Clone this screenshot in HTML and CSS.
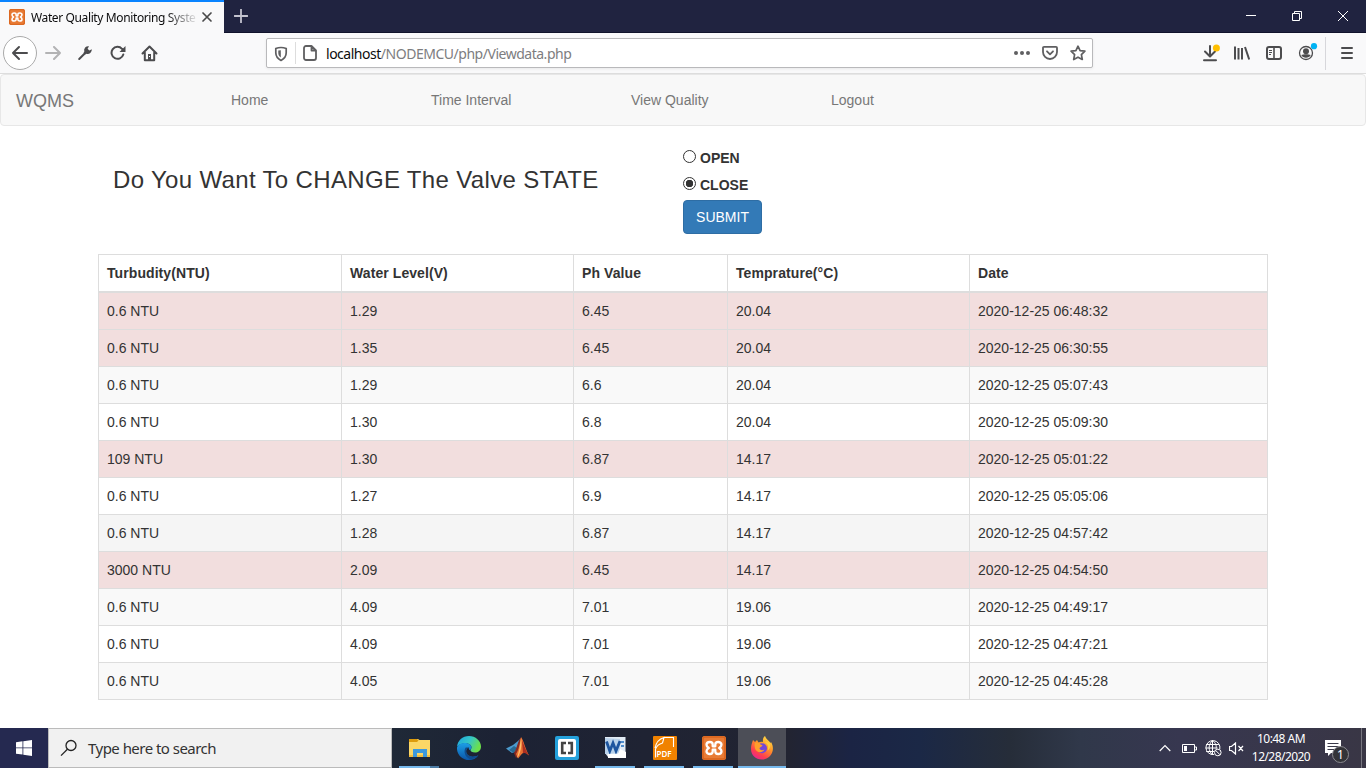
FILE: index.html
```html
<!DOCTYPE html>
<html lang="en">
<head>
<meta charset="utf-8">
<title>Water Quality Monitoring System</title>
<link rel="stylesheet" href="styles.css">
</head>
<body>
<svg class="defs" aria-hidden="true">
  <symbol id="xampp" viewBox="0 0 24 24">
    <rect width="24" height="24" rx="2.500" fill="#e87b35"/>
    <rect x="1" y="1" width="22" height="22" rx="2" fill="none" stroke="#d9641d" stroke-width="1.500"/>
    <path d="M12 10.300h-1.300V8.500C10.700 6.800 9.500 6 7.800 6S4.500 7 4.500 8.800 5.300 11 6.800 12C5.300 13 4.500 13.500 4.500 15.200S6.100 18 7.800 18s2.900-.8 2.900-2.500v-1.800h2.600v1.800c0 1.700 1.200 2.500 2.900 2.500s3.300-1 3.300-2.800-.8-2.200-2.300-3.200c1.500-1 2.300-1.500 2.300-3.200S17.900 6 16.200 6s-2.900.8-2.900 2.500v1.800z" fill="none" stroke="#fff" stroke-width="2.300" stroke-linejoin="round"/>
  </symbol>
</svg>
<div class="screen">
  <header class="titlebar">
    <div class="tab">
      <svg class="favicon" width="16" height="16"><use href="#xampp"/></svg>
      <span class="tab-title">Water Quality Monitoring Syste</span>
      <svg class="tab-close" width="12" height="12" viewBox="0 0 12 12"><path d="M2 2l8 8M10 2l-8 8" stroke="#4a4a4a" stroke-width="1.700" stroke-linecap="round"/></svg>
    </div>
    <svg class="new-tab" width="14" height="14" viewBox="0 0 14 14"><path d="M7 .5v13M.5 7h13" stroke="#c3c3cf" stroke-width="1.800" stroke-linecap="round"/></svg>
    <div class="window-buttons">
      <svg width="46" height="32" viewBox="0 0 46 32"><path d="M18 15.500h10" stroke="#fff"/></svg>
      <svg width="46" height="32" viewBox="0 0 46 32" fill="none" stroke="#fff"><path d="M18.500 13.500h7v7h-7zM20.500 13v-1.500h7v7H26"/></svg>
      <svg width="46" height="32" viewBox="0 0 46 32"><path d="M18 11l10 10M28 11L18 21" stroke="#fff"/></svg>
    </div>
  </header>

  <div class="toolbar">
    <div class="nav-buttons">
      <span class="back"><svg width="18" height="16" viewBox="0 0 18 16"><path d="M16 8H2M8 2L2 8l6 6" class="line"/></svg></span>
      <svg class="forward" width="18" height="16" viewBox="0 0 18 16"><path d="M2 8h14M10 2l6 6-6 6" class="line"/></svg>
      <svg class="wrench" width="16" height="16" viewBox="0 0 16 16"><path d="M2.200 14L8.500 7.700" stroke="#4c4c4e" stroke-width="2" stroke-linecap="round"/><path d="M14.800 4.300l-2.500 1.200-1.700-1.700L12 1.200a4.200 4.200 0 0 0-4.700 5.400L6.500 8l1.500 1.500 1.500-.7a4.200 4.200 0 0 0 5.300-4.500z" fill="#4c4c4e"/></svg>
      <svg class="reload" width="16" height="16" viewBox="0 0 16 16"><path d="M13.300 9.500A6 6 0 1 1 12 3.800l1.500 1.500" class="line"/><path d="M15.500 1v6h-6z" fill="#4c4c4e"/></svg>
      <svg class="home" width="17" height="17" viewBox="0 0 17 17"><path d="M1.500 8.500l7-7 7 7M3.800 7.500v7.700h9.400V7.500" class="line"/><path d="M7 9h3v6H7z" fill="#4c4c4e"/><path d="M8 11h1v1H8z" fill="#fff"/></svg>
    </div>
    <div class="urlbar">
      <svg class="shield" width="14" height="16" viewBox="0 0 14 16"><path d="M7 1.500c2 0 3.700.4 5.200 1v4.200c0 3.600-2 6-5.200 7.700-3.200-1.700-5.200-4.100-5.200-7.700V2.500C3.300 1.900 5 1.500 7 1.500z" fill="none" stroke="#5f5f61" stroke-width="1.700"/><path d="M6.800 4.200v7.200C5 10.200 4.300 8.700 4.300 7V4.600z" fill="#5f5f61"/></svg>
      <i class="url-divider"></i>
      <svg class="page-icon" width="14" height="16" viewBox="0 0 14 16"><path d="M3 1h5.500L13 5.500V13a2 2 0 0 1-2 2H3a2 2 0 0 1-2-2V3a2 2 0 0 1 2-2zM8.500 1v4.500H13" fill="none" stroke="#5f5f61" stroke-width="1.800" stroke-linejoin="round"/></svg>
      <span class="url"><b>localhost</b>/NODEMCU/php/Viewdata.php</span>
      <div class="url-actions">
        <svg width="16" height="16" viewBox="0 0 16 16" fill="#5f5f61"><circle cx="2" cy="8" r="2"/><circle cx="8" cy="8" r="2"/><circle cx="14" cy="8" r="2"/></svg>
        <svg width="16" height="16" viewBox="0 0 16 16" fill="none" stroke="#5f5f61" stroke-width="1.800" stroke-linecap="round" stroke-linejoin="round"><path d="M2 1.800h12a1 1 0 0 1 1 1V7A7 7 0 0 1 1 7V2.800a1 1 0 0 1 1-1z"/><path d="M5 6.300l3 3 3-3"/></svg>
        <svg width="16" height="16" viewBox="0 0 16 16" fill="none" stroke="#5f5f61" stroke-width="1.700" stroke-linejoin="round"><path d="M8 1.200l2.100 4.400 4.800.6-3.500 3.400.9 4.900L8 12.200l-4.300 2.300.9-4.900L1.100 6.200l4.800-.6z"/></svg>
      </div>
    </div>
    <div class="tools">
      <svg width="17" height="18" viewBox="0 0 17 18"><path d="M7 2v10M2 7.500l5 5 5-5M1 16.200h12" class="line"/><circle cx="13.400" cy="4" r="3.500" fill="#ffbf00"/></svg>
      <svg width="16" height="16" viewBox="0 0 16 16"><path d="M1 1.500v13M4.500 3v11.500M8 3v11.500M11 2l4.200 12.500" fill="none" stroke="#4c4c4e" stroke-width="2"/></svg>
      <svg width="16" height="16" viewBox="0 0 16 16"><rect x="1" y="2" width="14" height="12" rx="2" class="line"/><path d="M8 2v12" stroke="#4c4c4e" stroke-width="1.600"/><path d="M3 5.500h3M3 7.500h3M3 9.500h2" stroke="#4c4c4e"/></svg>
      <svg width="20" height="18" viewBox="0 0 20 18"><circle cx="8" cy="10" r="6.500" fill="none" stroke="#4c4c4e" stroke-width="1.300"/><circle cx="8" cy="8.300" r="3" fill="#4c4c4e"/><path d="M3.300 12c2-1 7.400-1 9.400 0-1.500 3.700-7.900 3.700-9.400 0z" fill="#4c4c4e"/><circle cx="16" cy="3.200" r="3.100" fill="#00b3f4"/></svg>
      <i class="tool-divider"></i>
      <svg width="12" height="14" viewBox="0 0 12 14"><path d="M1 2h10M1 7h10M1 12h10" class="line"/></svg>
    </div>
  </div>

  <main class="page">
    <nav class="navbar">
      <span class="brand">WQMS</span>
      <a>Home</a><a>Time Interval</a><a>View Quality</a><a>Logout</a>
    </nav>
    <section class="container">
      <form class="valve">
        <h3><span>Do You Want To CHANGE The Valve STATE</span></h3>
        <div class="choices">
          <label><i class="radio"></i><span class="open">OPEN</span></label>
          <label><i class="radio checked"></i><span class="close">CLOSE</span></label>
          <button type="button">SUBMIT</button>
        </div>
      </form>
      <table>
        <colgroup><col class="c1"><col class="c2"><col class="c3"><col class="c4"><col class="c5"></colgroup>
        <thead><tr><th>Turbudity(NTU)</th><th>Water Level(V)</th><th>Ph Value</th><th>Temprature(°C)</th><th>Date</th></tr></thead>
        <tbody>
          <tr class="danger"><td>0.6 NTU</td><td>1.29</td><td>6.45</td><td>20.04</td><td>2020-12-25 06:48:32</td></tr>
          <tr class="danger"><td>0.6 NTU</td><td>1.35</td><td>6.45</td><td>20.04</td><td>2020-12-25 06:30:55</td></tr>
          <tr class="odd"><td>0.6 NTU</td><td>1.29</td><td>6.6</td><td>20.04</td><td>2020-12-25 05:07:43</td></tr>
          <tr><td>0.6 NTU</td><td>1.30</td><td>6.8</td><td>20.04</td><td>2020-12-25 05:09:30</td></tr>
          <tr class="danger"><td>109 NTU</td><td>1.30</td><td>6.87</td><td>14.17</td><td>2020-12-25 05:01:22</td></tr>
          <tr><td>0.6 NTU</td><td>1.27</td><td>6.9</td><td>14.17</td><td>2020-12-25 05:05:06</td></tr>
          <tr class="hover"><td>0.6 NTU</td><td>1.28</td><td>6.87</td><td>14.17</td><td>2020-12-25 04:57:42</td></tr>
          <tr class="danger"><td>3000 NTU</td><td>2.09</td><td>6.45</td><td>14.17</td><td>2020-12-25 04:54:50</td></tr>
          <tr class="odd"><td>0.6 NTU</td><td>4.09</td><td>7.01</td><td>19.06</td><td>2020-12-25 04:49:17</td></tr>
          <tr><td>0.6 NTU</td><td>4.09</td><td>7.01</td><td>19.06</td><td>2020-12-25 04:47:21</td></tr>
          <tr class="odd"><td>0.6 NTU</td><td>4.05</td><td>7.01</td><td>19.06</td><td>2020-12-25 04:45:28</td></tr>
        </tbody>
      </table>
    </section>
  </main>

  <footer class="taskbar">
    <div class="start"><svg width="16" height="16" viewBox="0 0 16 16" fill="#fff"><path d="M0 2.200L6.500 1.300V7.500H0zM7.300 1.200L16 0v7.500H7.300zM0 8.300h6.500v6.200L0 13.700zM7.300 8.300H16V16l-8.700-1.300z"/></svg></div>
    <div class="search">
      <svg width="18" height="18" viewBox="0 0 18 18" fill="none" stroke="#222" stroke-width="1.300"><circle cx="11" cy="6.500" r="5"/><path d="M7.400 10.200L1 16.600"/></svg>
      <span>Type here to search</span>
    </div>
    <div class="apps">
      <div class="app running stacked"><svg width="24" height="24" viewBox="0 0 24 24"><path d="M1 3h9l1.500 1H22v17H1z" fill="#fbd766"/><path d="M1 3h8l1.500 1.500L9 6H1z" fill="#dd9c0d"/><path d="M5 21v-8h14v8h-4v-4H9v4z" fill="#3d99dc"/><path d="M1 19h4v2H1zM19 19h3v2h-3zM9 19h6v2H9z" fill="#f3bd3c"/></svg></div>
      <div class="app"><svg width="24" height="24" viewBox="0 0 24 24">
        <defs><linearGradient id="e1" x1="0" x2="1" y1="0" y2=".4"><stop stop-color="#1ba3df"/><stop offset=".55" stop-color="#35c6c8"/><stop offset="1" stop-color="#6be04c"/></linearGradient><linearGradient id="e2" x1="0" y1="0" x2="0" y2="1"><stop stop-color="#1c9fe6"/><stop offset="1" stop-color="#0b55a8"/></linearGradient></defs>
        <path d="M0 11C.5 4.500 5.500 0 12 0s12 5 12 10.500c0 4-3 6-6 6s-4.500-1.200-4.500-2.200 1-1.300 1-3c0-2-2.500-4-6-4C4.500 7.300 1 9 0 11z" fill="url(#e1)"/>
        <path d="M0 11.500c1-3 4-4.500 7.500-4.500 4 0 7 2 7 4.500 0 1.500-1.200 1.600-1.200 2.800-1.300-.5-1.800-1.800-1.500-3-2.300 1-3 3-2.500 5.200 1 4 6.500 5.500 12 2.700C19 22.500 15.800 24 12 24 5.500 24-.5 18.500 0 11.500z" fill="url(#e2)"/>
        <path d="M8.800 11.500c-2.500 3-1.300 9.500 4 11.400 4 .2 7-1.300 8.500-3.700-5.500 2.800-11 1.300-12-2.700-.5-2 .2-4 2-5z" fill="#104b8c"/></svg></div>
      <div class="app"><svg width="24" height="24" viewBox="0 0 24 24"><path d="M0 12.500l7-3.500 5-4 2-2-4 12-4 2z" fill="#4b9acd"/><path d="M3 14l5-4 3 2-3 5z" fill="#286a94"/><path d="M8 17c3-4 4-14 7.500-15.500L12 20l-2 2z" fill="#872b22"/><path d="M15 1c2.500 3 4.500 12.500 8 18.500-2.500-2.500-4-3.500-6-2.500-2 1.500-3.500 4-5 5.500L10 18c3-4 4-12 5-17z" fill="#ea7132"/><path d="M15 2c1 5 .5 12-2.500 18l-1.500 2c2-6 3-13 4-20z" fill="#ffc06d"/><path d="M16 4c2 5 4 11 7 15.500-3-2-4-3-6-2z" fill="#ac3021"/></svg></div>
      <div class="app"><svg width="24" height="24" viewBox="0 0 24 24"><rect width="24" height="24" rx="2" fill="#24a1dc"/><rect x="3" y="3" width="18" height="18" rx="2" fill="#fff"/><path d="M11 7H7.200v10H11M13 7h3.800v10H13" fill="none" stroke="#444" stroke-width="2.600"/></svg></div>
      <div class="app running"><svg width="24" height="24" viewBox="0 0 24 24"><path d="M1 1h20.500v20H4L1 17z" fill="#e2ebf5"/><path d="M1 2l15 1v14L1 18z" fill="#b9d2eb"/><path d="M2.500 5.500l3.300 9.500L9 7l3 8 4-10" fill="none" stroke="#1d559f" stroke-width="2.800"/><path d="M17 5h3v2h-3zM17 9h3v2h-3z" fill="#4f8dcc"/><path d="M4 18h10l2-5 6 3v6H4z" fill="#fff"/></svg></div>
      <div class="app running"><div class="pdf"><svg width="24" height="24" viewBox="0 0 24 24"><rect width="24" height="24" rx="1" fill="#f08200"/><path d="M2 12C3 7 6 3 11 1.500L9.500 7C6 8 3.500 10.500 2.500 13v8.500M11 1.500h9.500V11" fill="none" stroke="#fff" stroke-width="1.100"/></svg><span>PDF</span></div></div>
      <div class="app running"><svg width="24" height="24"><use href="#xampp"/></svg></div>
      <div class="app running active"><svg width="24" height="24" viewBox="0 0 24 24">
        <defs><linearGradient id="f1" x1=".8" y1="0" x2=".2" y2="1"><stop stop-color="#ffe449"/><stop offset=".4" stop-color="#ff9528"/><stop offset=".75" stop-color="#ff3d50"/><stop offset="1" stop-color="#e5229a"/></linearGradient></defs>
        <path d="M2 7l1-3 2 2 2-2 1.500 2.500C10 5.500 12 5.500 13 6c-.5-3 .5-5 2-6 .8 3 4 4.500 5.500 7l.5-1c2 3 2.700 8 .7 11.500C19.800 21 16.500 23.500 12 23.500 5.500 23.500 1 19 1 13c0-2.300.3-4 1-6z" fill="url(#f1)"/>
        <circle cx="12" cy="12.300" r="5" fill="#7548d9"/><path d="M5 7c3-1 5 0 5.500 1.500l2 .7c-.3 1.500-2.500 1.800-3 2.800 0 2 2.500 3 5 1.500-2 4-8 3.300-9.300-.5C4.500 10.500 4.400 9 5 7z" fill="#ff9f2b"/><path d="M14 6c4 1 5 5 3.500 8.500 2.500-1 3.500-5 2-8z" fill="#ffcf3d"/></svg></div>
    </div>
    <div class="tray">
      <svg class="chevron" width="12" height="8" viewBox="0 0 12 8"><path d="M.7 7L6 1.500 11.300 7" fill="none" stroke="#fff" stroke-width="1.200"/></svg>
      <svg class="battery" width="15" height="9" viewBox="0 0 15 9"><path d="M.5.500h12v8H.5zM13 3h1.500v3H13" fill="none" stroke="#fff"/><path d="M2 2h3v5H2z" fill="#fff"/></svg>
      <svg class="globe" width="17" height="17" viewBox="0 0 17 17" fill="none" stroke="#fff"><path d="M9 14.500A7 7 0 1 1 14.800 9M7.500.500C3 5 3 10 7.500 15M7.500.500C11 3 11.500 6 11.200 8.500M1.200 4.500h12.700M.5 8h12M1.200 11.500h8M7.500.500v14"/><circle cx="12.800" cy="12.500" r="3.300"/><path d="M10.500 10.300l4.500 4.500"/></svg>
      <svg class="volume" width="15" height="13" viewBox="0 0 15 13" fill="none" stroke="#fff"><path d="M.5 4.500h2l4-3.500v11l-4-3.500h-2zM9.500 4l4.500 5M14 4L9.500 9" stroke-width="1.200"/></svg>
      <div class="clock"><span class="time">10:48 AM</span><span class="date">12/28/2020</span></div>
      <div class="notice"><svg width="17" height="17" viewBox="0 0 17 17"><path d="M0 0h16v13H6l-3 3v-3H0z" fill="#fff"/><path d="M2.500 3.500h11M2.500 6.500h11M2.500 9.500h7" stroke="#3b3a4a"/></svg><span class="badge">1</span></div>
      <i class="peek"></i>
    </div>
  </footer>
</div>
</body>
</html>
```
FILE: styles.css
```css
* { box-sizing: border-box; }
body { margin: 0; }
svg { display: block; flex: none; }
.defs { position: absolute; width: 0; height: 0; }
.screen { width: 1366px; height: 768px; display: flex; flex-direction: column; overflow: hidden; background: #fff; font-family: "Liberation Sans", Arial, sans-serif; }
.line { fill: none; stroke: #4c4c4e; stroke-width: 2; stroke-linecap: round; stroke-linejoin: round; }

/* Browser window */
.titlebar { height: 33px; flex: none; display: flex; background: #202340; border-bottom: 1px solid #11132c; }
.tab { width: 224px; height: 33px; flex: none; display: flex; align-items: center; padding: 0 11px 2px 9px; background: #f9f9fa; border-top: 2px solid #0a84ff; }
.tab-title { width: 166px; margin: 2px 0 0 6px; white-space: nowrap; font: 12px/20px "Noto Sans", sans-serif; letter-spacing: -.38px; color: #0c0c0d; -webkit-mask-image: linear-gradient(90deg, #000 135px, transparent 168px); mask-image: linear-gradient(90deg, #000 135px, transparent 168px); }
.tab-close { margin-left: 4px; }
.new-tab { margin: 9px 0 0 10px; }
.window-buttons { display: flex; margin-left: auto; }
.toolbar { height: 41px; flex: none; display: flex; align-items: flex-start; background: #f9f9fa; border-bottom: 1px solid #ddd; }
.nav-buttons { width: 266px; height: 40px; display: flex; align-items: center; padding-left: 3px; }
.back { width: 34px; height: 34px; display: grid; place-items: center; border: 1px solid #aaa; border-radius: 50%; background: #fff; }
.forward { margin-left: 7px; opacity: .4; }
.wrench { margin-left: 15px; }
.reload { margin-left: 17px; }
.home { margin-left: 15px; }
.urlbar { width: 827px; height: 30px; margin-top: 5px; display: flex; align-items: center; padding: 0 6px 0 7px; background: #fff; border: 1px solid #b9b9bb; border-radius: 2px; box-shadow: 0 1px 3px #0001; }
.url-divider { width: 1px; height: 22px; margin: 0 7px 0 7px; background: #ddd; }
.shield { margin-top: 1px; }
.url { margin: 2px 0 0 9px; font: 14px/20px "Noto Sans", sans-serif; letter-spacing: -.48px; color: #7d7d80; white-space: nowrap; }
.url b { font-weight: 400; color: #0c0c0d; }
.url-actions { display: flex; gap: 12px; margin-left: auto; }
.tools { flex: 1; height: 40px; display: flex; align-items: center; padding-left: 110px; }
.tools svg:nth-child(2) { margin-left: 14px; }
.tools svg:nth-child(3) { margin-left: 16px; }
.tools svg:nth-child(4) { margin: -2px 0 0 16px; }
.tool-divider { width: 1px; height: 33px; margin: 0 15px 0 7px; background: #d7d7db; }

/* Page content */
.page { height: 654px; flex: none; color: #333; font-size: 14px; line-height: 20px; }
.navbar { height: 52px; display: flex; align-items: center; padding-left: 15px; border: 1px solid #e7e7e7; border-radius: 4px; background: #f8f8f8; color: #777; }
.brand { width: 215px; font-size: 18px; padding-top: 2px; }
.navbar a { width: 200px; margin-top: -1px; }
.container { width: 1170px; margin: 0 auto; }
.valve { height: 128px; display: flex; padding: 0 15px; }
.valve h3 { width: 570px; margin: 41px 0 0; font-size: 24px; line-height: 26px; font-weight: 400; letter-spacing: .34px; white-space: nowrap; }
.choices { display: flex; flex-direction: column; align-items: flex-start; padding-top: 22px; }
.choices label { height: 27px; display: flex; align-items: flex-start; gap: 4px; font-weight: 700; }
.radio { width: 13px; height: 13px; margin-top: 2px; border: 1px solid #333; border-radius: 50%; background: #fff; }
.radio.checked { background: radial-gradient(circle, #333 0 3.500px, #fff 4px); }
.choices button { width: 79px; height: 34px; margin-top: -2px; padding: 0; border: 1px solid #2e6da4; border-radius: 4px; background: #337ab7; color: #fff; font: 14px/20px "Liberation Sans", Arial, sans-serif; }
table { width: 1170px; table-layout: fixed; border-collapse: separate; border-spacing: 0; border: solid #ddd; border-width: 1px 0 0 1px; }
.c1 { width: 243px; }
.c2 { width: 232px; }
.c3 { width: 154px; }
.c4 { width: 242px; }
.c5 { width: 298px; }
th, td { height: 37px; padding: 0 8px; text-align: left; border: solid #ddd; border-width: 0 1px 1px 0; white-space: nowrap; }
th { height: 38px; border-bottom-width: 2px; letter-spacing: .08px; }
.odd { background: #f9f9f9; }
.hover { background: #f5f5f5; }
.danger { background: #f2dede; }

/* Desktop taskbar */
.taskbar { height: 40px; flex: none; display: flex; color: #fff; background: linear-gradient(90deg, #252a50 0, #1f2937 390px, #1c2234 500px, #222432 790px, #1b2444 850px, #1b2846 920px, #262d39 1010px, #30384a 1080px, #373750 1180px, #393645 1366px); font-family: "Noto Sans", sans-serif; }
.start { width: 48px; display: grid; place-items: center; background: #252950; }
.search { width: 344px; display: flex; align-items: center; padding-left: 11px; background: #f1f1f1; border: 1px solid #bbb; color: #333; font-size: 15px; }
.search span { margin-left: 10px; letter-spacing: -.53px; }
.apps { display: flex; padding-left: 3px; }
.app { width: 49px; height: 40px; display: grid; place-items: center; border-bottom: 2px solid transparent; }
.app svg { margin-top: 2px; }
.running { background: linear-gradient(#76b9ed, #76b9ed) 4px bottom / 40px 2px no-repeat border-box; }
.stacked { background: linear-gradient(90deg, #76b9ed 31px, #4d7da6 31px) 4px bottom / 40px 2px no-repeat border-box; }
.active { width: 48px; background: linear-gradient(#76b9ed, #76b9ed) center bottom / 48px 2px no-repeat border-box, #4c4e57; }
.pdf { display: grid; }
.pdf > * { grid-area: 1 / 1; }
.pdf span { align-self: end; margin: 0 0 2px 4px; font-size: 8px; line-height: 9px; font-weight: 600; }
.tray { flex: 1; display: flex; align-items: center; padding-left: 373px; }
.battery { margin-left: 11px; }
.globe { margin-left: 8px; }
.volume { margin-left: 7px; }
.clock { width: 62px; margin: 0 0 0 6px; display: flex; flex-direction: column; align-items: center; font-size: 12px; line-height: 18px; letter-spacing: -.55px; white-space: nowrap; }
.notice { position: relative; margin-left: 13px; }
.badge { position: absolute; left: 7px; top: 6px; width: 17px; height: 17px; border: 1px solid #8b8b91; border-radius: 50%; background: #333338; font-size: 12px; line-height: 15px; text-align: center; }
.peek { width: 1px; height: 40px; margin: 0 4px 0 auto; background: #77767f; }
```
